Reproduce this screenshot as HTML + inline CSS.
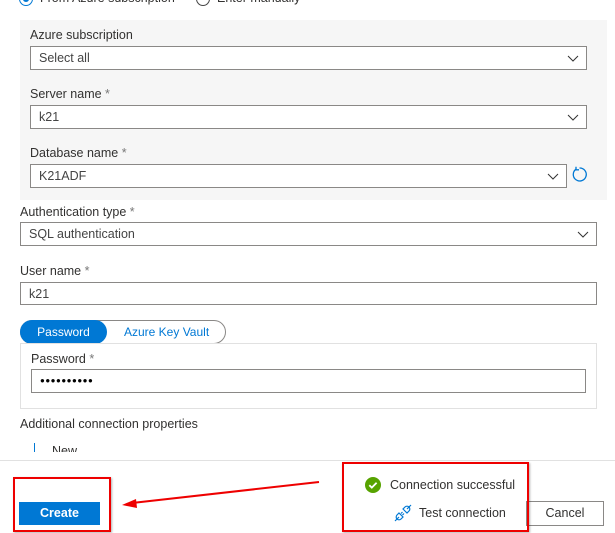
<!DOCTYPE html>
<html><head><meta charset="utf-8"><style>
*{box-sizing:border-box;margin:0;padding:0}
body{width:615px;height:533px;overflow:hidden;background:#fff;font-family:"Liberation Sans",sans-serif;font-size:12.5px;color:#323130;position:relative}
.a{position:absolute}
.lbl{position:absolute;font-size:12.5px;color:#323130}
.lbl i{font-style:normal;color:#777}
.box{position:absolute;border:1px solid #8a8886;background:#fff;height:24px;padding-left:8px;line-height:22px;color:#444;font-size:12.5px}
.chev{position:absolute;right:7px;top:6px;width:12px;height:10px}
.red{position:absolute;border:2px solid #e00;box-shadow:1px 1px 2px rgba(0,0,0,.3)}
</style></head><body>
<div class="a" style="left:19px;top:-8px;width:14px;height:14px;border:1px solid #0078d4;border-radius:50%"><div style="position:absolute;left:3px;top:3px;width:6px;height:6px;border-radius:50%;background:#0078d4"></div></div>
<div class="a" style="left:40px;top:-9px;font-size:12.5px">From Azure subscription</div>
<div class="a" style="left:196px;top:-8px;width:14px;height:14px;border:1px solid #444;border-radius:50%"></div>
<div class="a" style="left:217px;top:-9px;font-size:12.5px">Enter manually</div>

<div class="a" style="left:20px;top:20px;width:587px;height:180px;background:#f6f6f6"></div>
<div class="lbl" style="left:30px;top:28px">Azure subscription</div>
<div class="box" style="left:30px;top:46px;width:557px">Select all<svg class="chev" viewBox="0 0 12 10"><path d="M1 3l5 5 5-5" fill="none" stroke="#333" stroke-width="1"/></svg></div>
<div class="lbl" style="left:30px;top:87px">Server name <i>*</i></div>
<div class="box" style="left:30px;top:105px;width:557px">k21<svg class="chev" viewBox="0 0 12 10"><path d="M1 3l5 5 5-5" fill="none" stroke="#333" stroke-width="1"/></svg></div>
<div class="lbl" style="left:30px;top:146px">Database name <i>*</i></div>
<div class="box" style="left:30px;top:164px;width:537px">K21ADF<svg class="chev" viewBox="0 0 12 10"><path d="M1 3l5 5 5-5" fill="none" stroke="#333" stroke-width="1"/></svg></div>
<svg class="a" style="left:571px;top:166px" width="17" height="17" viewBox="0 0 17 17"><path d="M5 3.2A6.5 6.5 0 1 0 8.5 2" fill="none" stroke="#0078d4" stroke-width="1.3"/><path d="M5 0.8v3h3" fill="none" stroke="#0078d4" stroke-width="1.3"/></svg>

<div class="lbl" style="left:20px;top:205px">Authentication type <i>*</i></div>
<div class="box" style="left:20px;top:222px;width:577px">SQL authentication<svg class="chev" viewBox="0 0 12 10"><path d="M1 3l5 5 5-5" fill="none" stroke="#333" stroke-width="1"/></svg></div>
<div class="lbl" style="left:20px;top:264px">User name <i>*</i></div>
<div class="box" style="left:20px;top:282px;width:577px;height:23px">k21</div>

<div class="a" style="left:20px;top:320px;width:206px;height:24px;border:1px solid #8a8886;border-radius:12px"></div>
<div class="a" style="left:20px;top:320px;width:87px;height:24px;background:#0078d4;border-radius:12px;color:#fff;text-align:center;line-height:24px;font-size:12px">Password</div>
<div class="a" style="left:124px;top:320px;line-height:24px;color:#0078d4;font-size:12px">Azure Key Vault</div>
<div class="a" style="left:20px;top:343px;width:577px;height:66px;border:1px solid #e1e1e1"></div>
<div class="lbl" style="left:31px;top:352px">Password <i>*</i></div>
<div class="box" style="left:31px;top:369px;width:555px;height:24px;font-size:8px;letter-spacing:0.5px;color:#000">&#9679;&#9679;&#9679;&#9679;&#9679;&#9679;&#9679;&#9679;&#9679;&#9679;</div>
<div class="lbl" style="left:20px;top:417px">Additional connection properties</div>
<div class="a" style="left:34px;top:443px;width:1px;height:9px;background:#0078d4"></div>
<div class="a" style="left:52px;top:442px;height:10px;overflow:hidden;font-size:12.5px;line-height:18px">New</div>

<div class="a" style="left:0;top:460px;width:615px;height:1px;background:#e1e1e1"></div>
<div class="a" style="left:19px;top:502px;width:81px;height:23px;background:#0078d4;color:#fff;font-weight:bold;text-align:center;line-height:23px;font-size:12.5px">Create</div>
<div class="red" style="left:13px;top:477px;width:98px;height:55px"></div>
<div class="a" style="left:526px;top:501px;width:78px;height:25px;border:1px solid #8a8886;text-align:center;line-height:23px;font-size:12.5px">Cancel</div>
<svg class="a" style="left:365px;top:477px" width="16" height="16" viewBox="0 0 16 16"><circle cx="8" cy="8" r="8" fill="#57a300"/><path d="M4.3 8.2l2.5 2.4 4.8-4.8" fill="none" stroke="#fff" stroke-width="1.8"/></svg>
<div class="a" style="left:390px;top:478px;font-size:12.5px">Connection successful</div>
<svg class="a" style="left:394px;top:504px" width="18" height="18" viewBox="0 0 18 18"><g fill="none" stroke="#0078d4" stroke-width="1.2"><path d="M1 17l4-4M17 1l-4 4"/><path d="M5 9l4 4-2 2a2.8 2.8 0 0 1-4-4z"/><path d="M9 5l4 4 2-2a2.8 2.8 0 0 0-4-4z"/><path d="M7 9.5l1.5-1.5M8.5 11l1.5-1.5"/></g></svg>
<div class="a" style="left:419px;top:506px;font-size:12.5px">Test connection</div>
<div class="red" style="left:342px;top:462px;width:187px;height:70px"></div>
<svg class="a" style="left:0;top:0" width="615" height="533"><line x1="319" y1="482" x2="132" y2="503" stroke="#e00" stroke-width="2"/><path d="M122 505l14-6 1 9z" fill="#e00"/></svg>
</body></html>
